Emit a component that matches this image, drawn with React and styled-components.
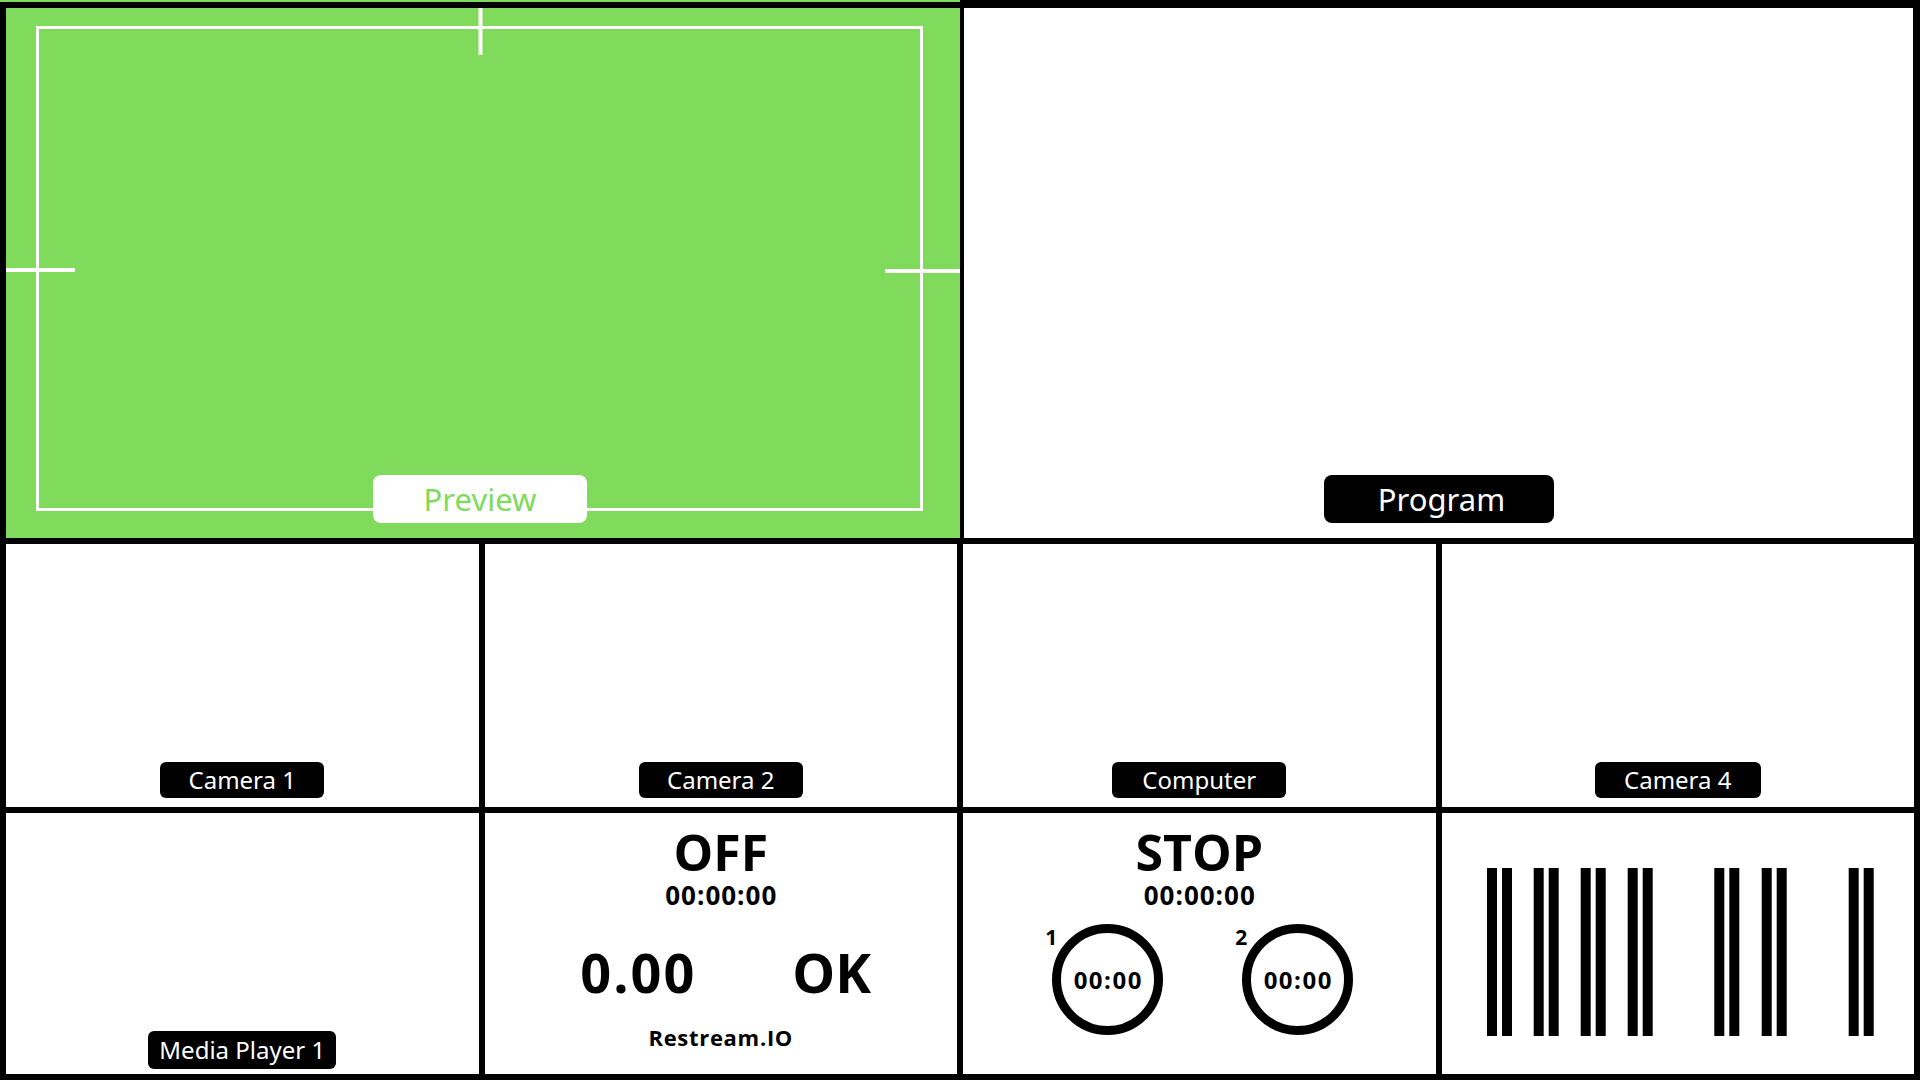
import React from "react";
import styled, { createGlobalStyle } from "styled-components";

const GREEN = "#80da5b";

const Global = createGlobalStyle`
  html, body { margin: 0; padding: 0; background: #000; }
  body { font-family: "Noto Sans", "Open Sans", sans-serif; }
  * { box-sizing: border-box; }
`;

const Screen = styled.div`
  width: 1920px;
  height: 1080px;
  background: #000;
  display: flex;
  flex-direction: column;
  overflow: hidden;
`;

const TopSliver = styled.div`
  flex: none;
  width: 960px;
  height: 2px;
  margin-bottom: 6px;
  background: ${GREEN};
`;

const MainRow = styled.div`
  flex: none;
  display: flex;
  gap: 4px;
  height: 530px;
  padding: 0 7px 0 6px;
`;

const PreviewPanel = styled.section`
  position: relative;
  width: 954px;
  flex: none;
  background: ${GREEN};
  display: flex;
  justify-content: center;
  align-items: flex-end;
  padding: 0 6px 15px 0;
`;

const ProgramPanel = styled.section`
  flex: 1;
  background: #fff;
  display: flex;
  justify-content: center;
  align-items: flex-end;
  padding-bottom: 15px;
`;

const Viewfinder = styled.svg`
  position: absolute;
  inset: 0;
  pointer-events: none;
`;

const BigTag = styled.div`
  position: relative;
  z-index: 1;
  width: ${(p) => p.$w}px;
  height: 48px;
  border-radius: 8px;
  background: ${(p) => (p.$light ? "#fff" : "#000")};
  color: ${(p) => (p.$light ? GREEN : "#fff")};
  font-family: "Noto Sans", sans-serif;
  font-size: 31px;
  font-weight: 400;
  display: flex;
  align-items: center;
  justify-content: center;
  line-height: 1;
  padding-left: ${(p) => p.$shift || 0}px;
`;

const Grid = styled.div`
  flex: none;
  display: grid;
  grid-template-columns: repeat(4, 1fr);
  column-gap: 6px;
  padding: 0 6px;
  margin-top: 6px;
  height: ${(p) => p.$h}px;
`;

const SourceCell = styled.div`
  background: #fff;
  display: flex;
  flex-direction: column;
  align-items: center;
  justify-content: flex-end;
  padding-bottom: ${(p) => p.$pb}px;
`;

const SourceTag = styled.div`
  width: ${(p) => p.$w}px;
  height: ${(p) => p.$h}px;
  border-radius: 6px;
  background: #000;
  color: #fff;
  font-family: "Noto Sans", sans-serif;
  font-size: 24px;
  line-height: 1;
  display: flex;
  align-items: center;
  justify-content: center;
`;

const StatCell = styled.div`
  background: #fff;
  display: flex;
  flex-direction: column;
  align-items: center;
  padding-top: 14px;
  font-family: "Open Sans", "Noto Sans", sans-serif;
  font-weight: 700;
  color: #000;
`;

const Status = styled.div`
  font-size: 50px;
  line-height: 1;
  height: 50px;
`;

const Timecode = styled.div`
  margin-top: 5px;
  font-size: 26px;
  line-height: 1;
  letter-spacing: 1px;
  padding-left: 1px;
`;

const ReadoutRow = styled.div`
  display: flex;
  gap: 96px;
  margin-top: 37px;
  padding-left: 10px;
`;

const Readout = styled.div`
  font-size: 54px;
  line-height: 1;
  letter-spacing: ${(p) => p.$ls || 0}px;
`;

const Brand = styled.div`
  margin-top: 27px;
  font-size: 22px;
  line-height: 1;
  letter-spacing: 0.7px;
`;

const TimerRow = styled.div`
  display: flex;
  gap: 79px;
  margin-top: 16px;
  padding-left: 7px;
`;

const Timer = styled.div`
  position: relative;
  width: 111px;
  height: 111px;
  border: 9px solid #000;
  border-radius: 50%;
  display: flex;
  align-items: center;
  justify-content: center;
  font-size: 24px;
  line-height: 1;
  letter-spacing: 1.5px;
  padding-left: 1px;
`;

const TimerIndex = styled.span`
  position: absolute;
  left: -16px;
  top: -6px;
  font-size: 21px;
  line-height: 1;
  letter-spacing: 0;
`;

const BarcodeCell = styled.div`
  background: #fff;
  padding: 55px 0 0 45px;
`;

const pairs = [0, 46.7, 93.7, 140.7, 227.3, 274.7, 361.7];

function Barcode() {
  return (
    <svg width="388" height="168" viewBox="0 0 388 168">
      {pairs.map((x) => (
        <g key={x} fill="#000">
          <rect x={x} y="0" width="10" height="168" />
          <rect x={x + 15} y="0" width="10" height="168" />
        </g>
      ))}
    </svg>
  );
}

export default function App() {
  return (
    <>
      <Global />
      <Screen>
        <TopSliver />
        <MainRow>
          <PreviewPanel>
            <Viewfinder width="954" height="530" viewBox="0 0 954 530">
              <rect x="31.5" y="19.5" width="884" height="482" fill="none" stroke="#fff" strokeWidth="3" />
              <rect x="472.5" y="0" width="4" height="47" fill="#fff" />
              <rect x="0" y="260" width="69" height="4" fill="#fff" />
              <rect x="879" y="261" width="75" height="4" fill="#fff" />
            </Viewfinder>
            <BigTag $light $w={214}>Preview</BigTag>
          </PreviewPanel>
          <ProgramPanel>
            <BigTag $w={230} $shift={6}>Program</BigTag>
          </ProgramPanel>
        </MainRow>

        <Grid $h={263}>
          <SourceCell $pb={9}>
            <SourceTag $w={164} $h={36}>Camera 1</SourceTag>
          </SourceCell>
          <SourceCell $pb={9}>
            <SourceTag $w={164} $h={36}>Camera 2</SourceTag>
          </SourceCell>
          <SourceCell $pb={9}>
            <SourceTag $w={174} $h={36}>Computer</SourceTag>
          </SourceCell>
          <SourceCell $pb={9}>
            <SourceTag $w={166} $h={36}>Camera 4</SourceTag>
          </SourceCell>
        </Grid>

        <Grid $h={261}>
          <SourceCell $pb={5}>
            <SourceTag $w={188} $h={38}>Media Player 1</SourceTag>
          </SourceCell>
          <StatCell>
            <Status>OFF</Status>
            <Timecode>00:00:00</Timecode>
            <ReadoutRow>
              <Readout $ls={2}>0.00</Readout>
              <Readout>OK</Readout>
            </ReadoutRow>
            <Brand>Restream.IO</Brand>
          </StatCell>
          <StatCell>
            <Status>STOP</Status>
            <Timecode>00:00:00</Timecode>
            <TimerRow>
              <Timer>
                <TimerIndex>1</TimerIndex>
                00:00
              </Timer>
              <Timer>
                <TimerIndex>2</TimerIndex>
                00:00
              </Timer>
            </TimerRow>
          </StatCell>
          <BarcodeCell>
            <Barcode />
          </BarcodeCell>
        </Grid>
      </Screen>
    </>
  );
}
